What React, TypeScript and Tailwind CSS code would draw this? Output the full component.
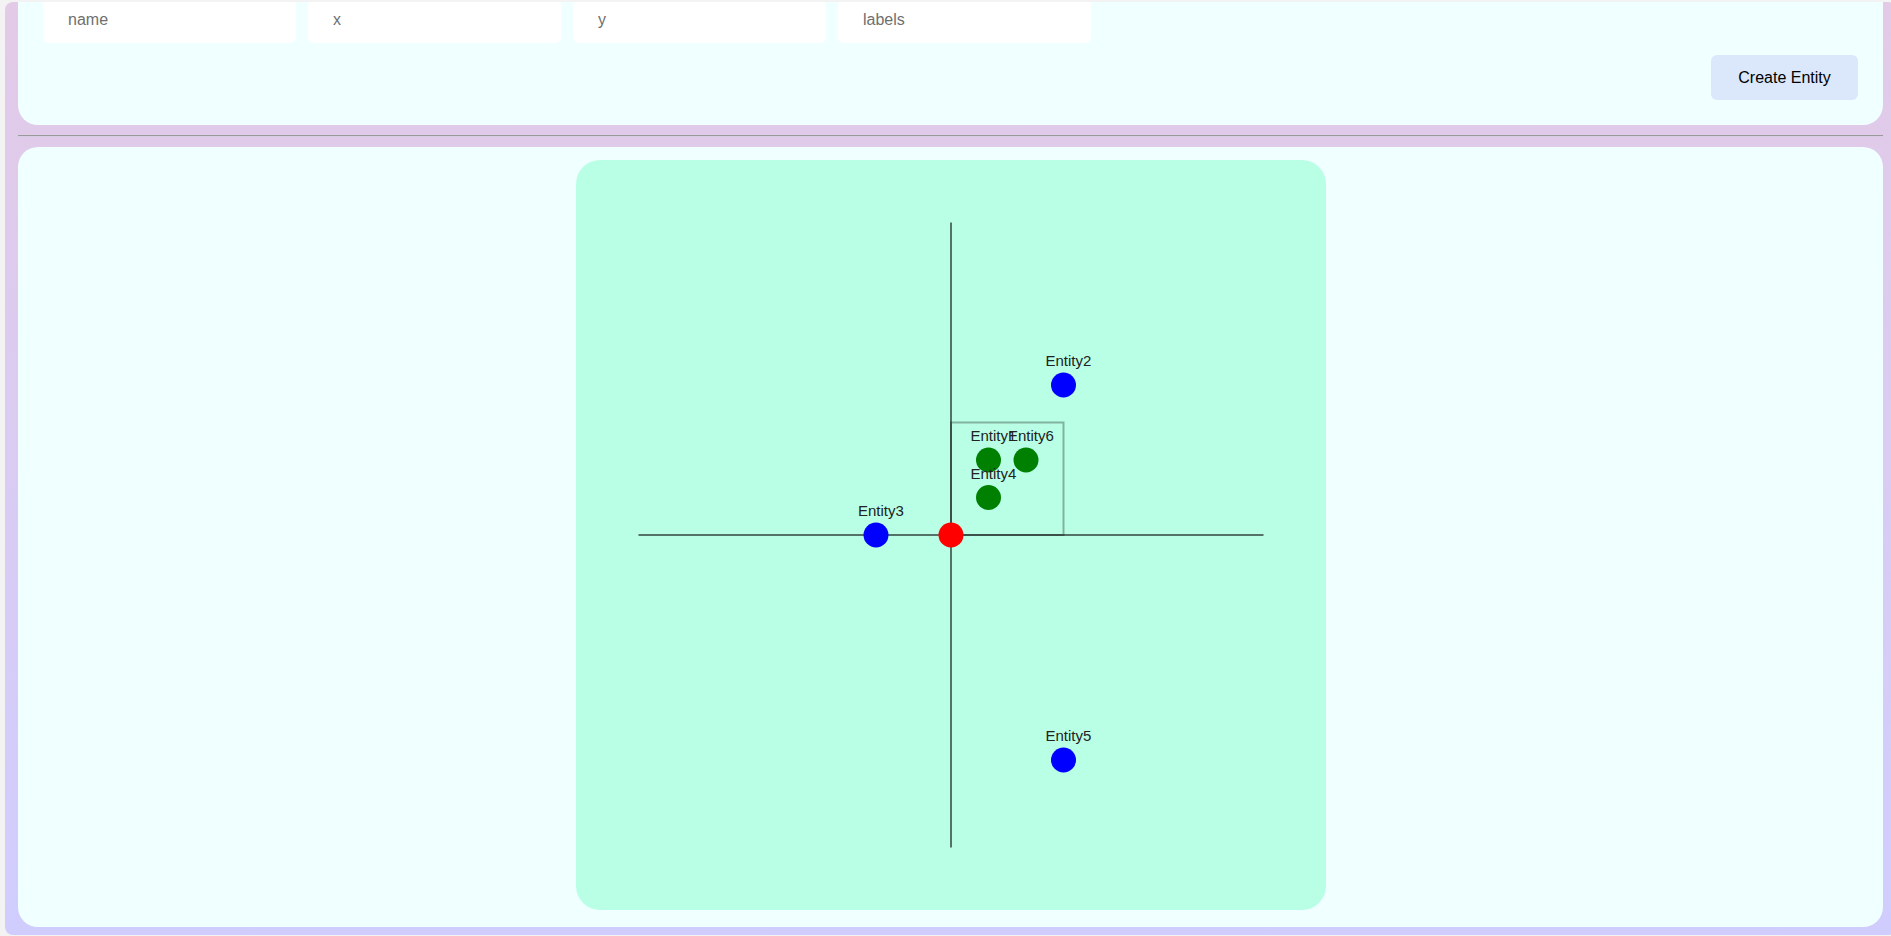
import React from 'react';

type Entity = { name: string; x: number; y: number; color: string };

const entities: Entity[] = [
  { name: 'Entity1', x: 1, y: 2, color: '#008000' },
  { name: 'Entity2', x: 3, y: 4, color: '#0000ff' },
  { name: 'Entity3', x: -2, y: 0, color: '#0000ff' },
  { name: 'Entity4', x: 1, y: 1, color: '#008000' },
  { name: 'Entity5', x: 3, y: -6, color: '#0000ff' },
  { name: 'Entity6', x: 2, y: 2, color: '#008000' },
];

const SIZE = 750;
const CENTER = 375;
const UNIT = 37.5;
const AXIS = 312.5;

function toPx(x: number, y: number) {
  return { cx: CENTER + x * UNIT, cy: CENTER - y * UNIT };
}

function Plane() {
  const corner = toPx(3, 3);
  return (
    <svg width={SIZE} height={SIZE} viewBox={`0 0 ${SIZE} ${SIZE}`}>
      {/* axes */}
      <line x1={CENTER - AXIS} y1={CENTER} x2={CENTER + AXIS} y2={CENTER} stroke="#000" strokeOpacity={0.55} strokeWidth={2} />
      <line x1={CENTER} y1={CENTER - AXIS} x2={CENTER} y2={CENTER + AXIS} stroke="#000" strokeOpacity={0.55} strokeWidth={2} />

      {/* selection box */}
      <rect
        x={CENTER}
        y={corner.cy}
        width={corner.cx - CENTER}
        height={CENTER - corner.cy}
        fill="none"
        stroke="#000"
        strokeOpacity={0.3}
        strokeWidth={2}
      />

      {entities.map((e) => {
        const { cx, cy } = toPx(e.x, e.y);
        return (
          <g key={e.name}>
            <circle cx={cx} cy={cy} r={12.5} fill={e.color} />
            <text
              x={cx - 18}
              y={cy - 19}
              fontSize={15}
              fill="#222"
              fontFamily='"Liberation Sans", Arial, sans-serif'
            >
              {e.name}
            </text>
          </g>
        );
      })}

      {/* origin */}
      <circle cx={CENTER} cy={CENTER} r={12.5} fill="#ff0000" />
    </svg>
  );
}

export default function App() {
  const fields = ['name', 'x', 'y', 'labels'];

  return (
    <div
      className="h-screen w-full overflow-hidden bg-[#f3f3f3] pt-[2px] pl-[5px]"
      style={{ fontFamily: '"Liberation Sans", Arial, sans-serif' }}
    >
      <div className="flex h-[933px] w-[1891px] flex-col justify-end overflow-hidden rounded-lg bg-gradient-to-b from-[#e3cae7] to-[#d0cdfe] px-[13px] pb-[8px]">
        {/* Create form */}
        <div className="shrink-0 rounded-[20px] bg-[#f0ffff] px-[25px] pt-[24px] pb-[25px]">
          <div className="flex gap-3">
            {fields.map((f) => (
              <input
                key={f}
                placeholder={f}
                className="h-[44px] w-[253px] rounded-md bg-white pr-6 pl-[25px] pb-0.5 text-base text-black outline-none placeholder:text-[#6f6f6f]"
              />
            ))}
          </div>
          <div className="mt-3 flex justify-end">
            <button className="h-[45px] w-[147px] rounded-md bg-[#dbe7fa] text-base text-black">
              Create Entity
            </button>
          </div>
        </div>

        {/* divider */}
        <div className="my-[10px] shrink-0">
          <div className="h-px bg-[#9a9a9a]" />
          <div className="h-px bg-[#d6cde0]" />
        </div>

        {/* Plane */}
        <div className="flex shrink-0 justify-center rounded-[20px] bg-[#f0ffff] pt-[13px] pb-[17px]">
          <div className="h-[750px] w-[750px] rounded-[24px] bg-[#b9ffe6]">
            <Plane />
          </div>
        </div>
      </div>
    </div>
  );
}
